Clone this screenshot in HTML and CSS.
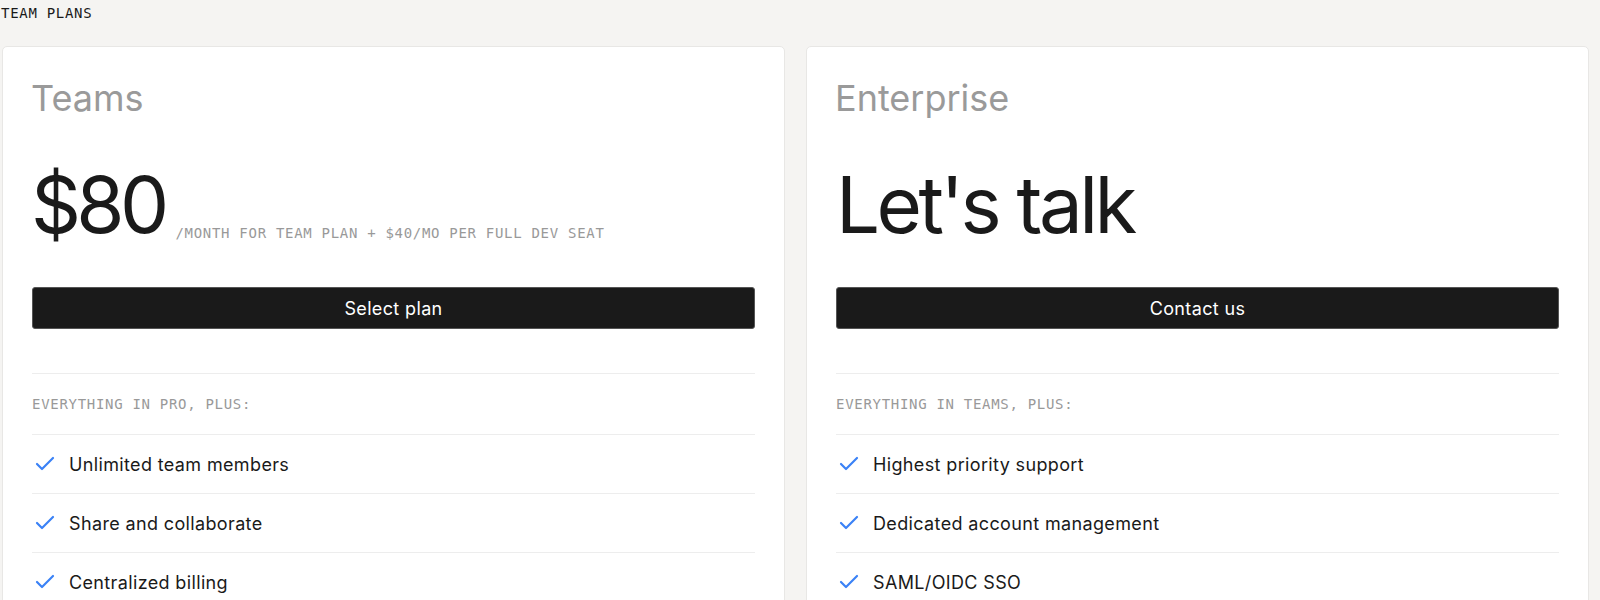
FILE: index.html
```html
<!DOCTYPE html>
<html lang="en">
<head>
<meta charset="utf-8">
<title>Team plans</title>
<link rel="stylesheet" href="styles.css">
</head>
<body>
<main class="page">
  <h2 class="section-label">TEAM PLANS</h2>
  <div class="plans">
    <section class="plan">
      <h3 class="plan-name">Teams</h3>
      <div class="price-row">
        <span class="price price-amount">$80</span>
        <span class="price-note">/MONTH FOR TEAM PLAN + $40/MO PER FULL DEV SEAT</span>
      </div>
      <button class="plan-btn" type="button">Select plan</button>
      <p class="features-label">EVERYTHING IN PRO, PLUS:</p>
      <ul class="features">
        <li class="feature"><svg class="check" viewBox="0 0 24 24" width="24" height="24"><path d="M20 6 9 17l-5-5"/></svg><span>Unlimited team members</span></li>
        <li class="feature"><svg class="check" viewBox="0 0 24 24" width="24" height="24"><path d="M20 6 9 17l-5-5"/></svg><span>Share and collaborate</span></li>
        <li class="feature"><svg class="check" viewBox="0 0 24 24" width="24" height="24"><path d="M20 6 9 17l-5-5"/></svg><span>Centralized billing</span></li>
      </ul>
    </section>
    <section class="plan">
      <h3 class="plan-name">Enterprise</h3>
      <div class="price-row">
        <span class="price">Let's talk</span>
      </div>
      <button class="plan-btn" type="button">Contact us</button>
      <p class="features-label">EVERYTHING IN TEAMS, PLUS:</p>
      <ul class="features">
        <li class="feature"><svg class="check" viewBox="0 0 24 24" width="24" height="24"><path d="M20 6 9 17l-5-5"/></svg><span>Highest priority support</span></li>
        <li class="feature"><svg class="check" viewBox="0 0 24 24" width="24" height="24"><path d="M20 6 9 17l-5-5"/></svg><span>Dedicated account management</span></li>
        <li class="feature"><svg class="check" viewBox="0 0 24 24" width="24" height="24"><path d="M20 6 9 17l-5-5"/></svg><span>SAML/OIDC SSO</span></li>
      </ul>
    </section>
  </div>
</main>
</body>
</html>
```

FILE: styles.css
```css
* {
  box-sizing: border-box;
}

html,
body {
  margin: 0;
  background: #f5f4f2;
  color: #1a1a1a;
  font-family: Inter, "Noto Sans", sans-serif;
}

.page {
  padding: 4px 0 0 2px;
}

.section-label {
  margin: 0 0 24px -1px;
  font-family: "DejaVu Sans Mono", "Liberation Mono", monospace;
  font-size: 14px;
  font-weight: 400;
  letter-spacing: 0.7px;
  line-height: 18px;
  color: #1a1a1a;
}

.plans {
  display: grid;
  grid-template-columns: 783px 783px;
  gap: 21px;
}

.plan {
  background: #fff;
  border: 1px solid #e8e7e5;
  border-radius: 5px;
  padding: 33px 29px 0;
  min-height: 580px;
}

.plan-name {
  margin: 0 0 0 -1px;
  font-size: 36px;
  font-weight: 400;
  line-height: 36px;
  letter-spacing: 0;
  color: #9a9a9a;
}

.price-row {
  display: flex;
  align-items: flex-end;
  gap: 11px;
  margin-top: 50px;
}

.price {
  font-size: 78px;
  font-weight: 400;
  line-height: 78px;
  letter-spacing: -0.045em;
  color: #1a1a1a;
}

.price-amount {
  margin-left: -1px;
  letter-spacing: -0.06em;
}

.price-note {
  margin-bottom: 3px;
  font-family: "DejaVu Sans Mono", "Liberation Mono", monospace;
  font-size: 14px;
  line-height: 16px;
  letter-spacing: 0.7px;
  color: #999;
}

.plan-btn {
  display: block;
  width: 100%;
  height: 42px;
  margin-top: 43px;
  border: 1px solid #555;
  border-radius: 3px;
  background: #1a1a1a;
  color: #fff;
  font-family: Inter, "Noto Sans", sans-serif;
  font-size: 18px;
  font-weight: 400;
  letter-spacing: 0.02em;
  cursor: pointer;
}

.features-label {
  margin: 44px 0 0;
  height: 61px;
  display: flex;
  align-items: center;
  border-top: 1px solid #ededed;
  font-family: "DejaVu Sans Mono", "Liberation Mono", monospace;
  font-size: 14px;
  letter-spacing: 0.7px;
  color: #999;
}

.features {
  list-style: none;
  margin: 0;
  padding: 0;
}

.feature {
  display: flex;
  align-items: center;
  gap: 12px;
  height: 59px;
  padding-left: 1px;
  border-top: 1px solid #ededed;
  font-size: 18px;
  letter-spacing: 0.02em;
  color: #1a1a1a;
}

.check {
  flex: none;
  fill: none;
  stroke: #3b82f6;
  stroke-width: 2.2;
  stroke-linecap: round;
  stroke-linejoin: round;
}
```
